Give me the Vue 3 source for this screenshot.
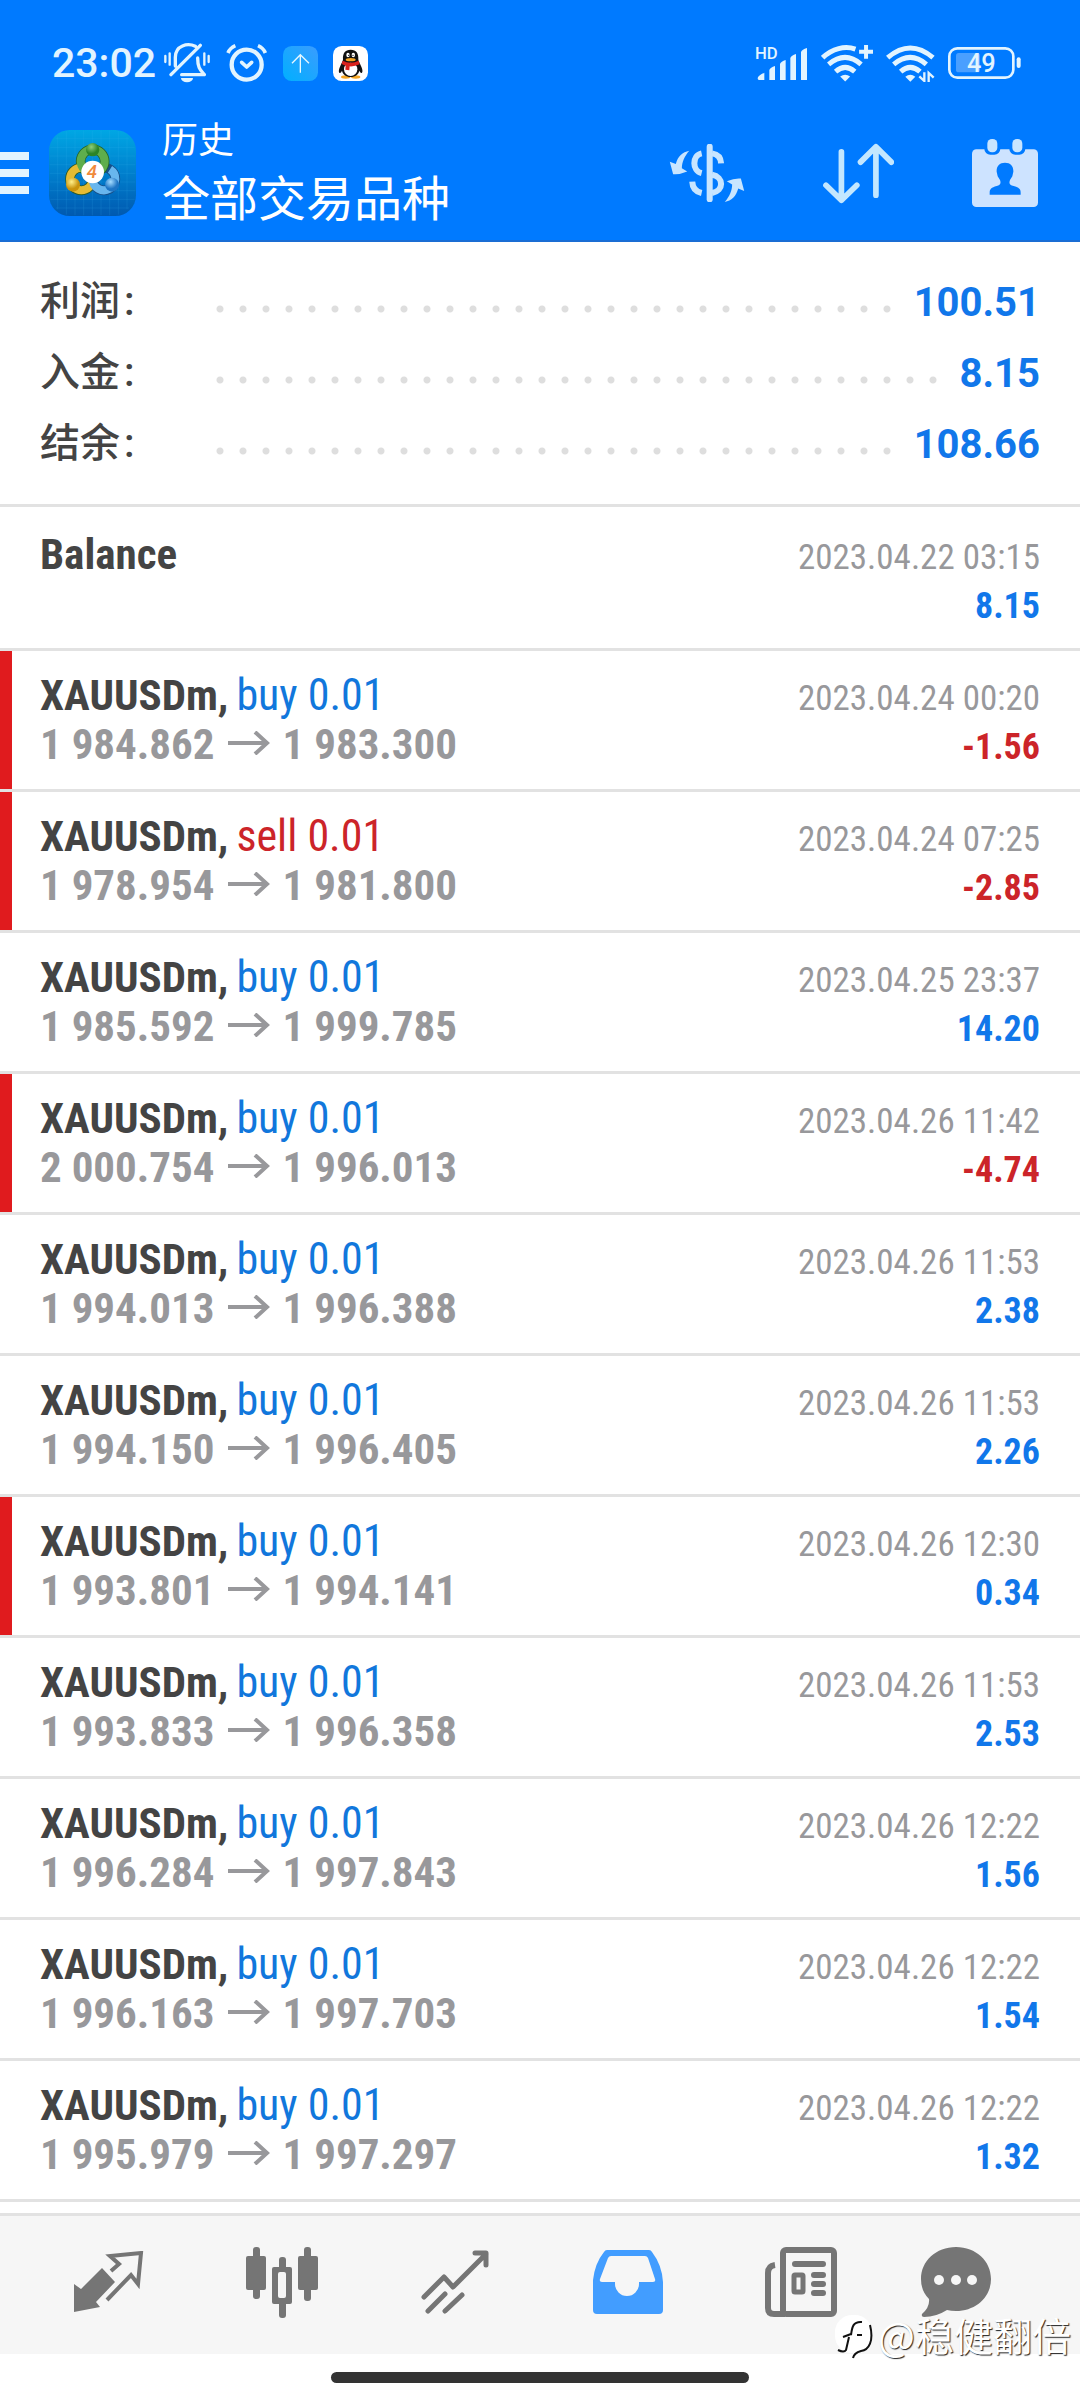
<script setup>
const totals = [
  { label: '利润', value: '100.51' },
  { label: '入金', value: '8.15' },
  { label: '结余', value: '108.66' },
]

const deals = [
  { symbol: 'Balance', time: '2023.04.22 03:15', profit: '8.15' },
  { symbol: 'XAUUSDm', side: 'buy', open: '1 984.862', close: '1 983.300', time: '2023.04.24 00:20', profit: '-1.56', marked: true },
  { symbol: 'XAUUSDm', side: 'sell', open: '1 978.954', close: '1 981.800', time: '2023.04.24 07:25', profit: '-2.85', marked: true },
  { symbol: 'XAUUSDm', side: 'buy', open: '1 985.592', close: '1 999.785', time: '2023.04.25 23:37', profit: '14.20' },
  { symbol: 'XAUUSDm', side: 'buy', open: '2 000.754', close: '1 996.013', time: '2023.04.26 11:42', profit: '-4.74', marked: true },
  { symbol: 'XAUUSDm', side: 'buy', open: '1 994.013', close: '1 996.388', time: '2023.04.26 11:53', profit: '2.38' },
  { symbol: 'XAUUSDm', side: 'buy', open: '1 994.150', close: '1 996.405', time: '2023.04.26 11:53', profit: '2.26' },
  { symbol: 'XAUUSDm', side: 'buy', open: '1 993.801', close: '1 994.141', time: '2023.04.26 12:30', profit: '0.34', marked: true },
  { symbol: 'XAUUSDm', side: 'buy', open: '1 993.833', close: '1 996.358', time: '2023.04.26 11:53', profit: '2.53' },
  { symbol: 'XAUUSDm', side: 'buy', open: '1 996.284', close: '1 997.843', time: '2023.04.26 12:22', profit: '1.56' },
  { symbol: 'XAUUSDm', side: 'buy', open: '1 996.163', close: '1 997.703', time: '2023.04.26 12:22', profit: '1.54' },
  { symbol: 'XAUUSDm', side: 'buy', open: '1 995.979', close: '1 997.297', time: '2023.04.26 12:22', profit: '1.32' },
]
</script>

<template>
  <div class="page">
    <header class="header">
      <div class="status">
        <div class="status-left">
          <span class="clock">23:02</span>
          <svg class="bell" width="48" height="42" viewBox="0 0 144 126" fill="none" stroke="#e2f4ff" stroke-width="10" stroke-linecap="round">
            <path d="M112 10 24 98M37 72V46C37 10 74 2 97 13M104 48C104 78 112 84 124 98H56" stroke-linejoin="round" />
            <path d="M7 42v18M20 34v34M124 34v34M137 42v18" stroke-width="7" />
            <path d="M54 108h36a18 13 0 0 1-36 0Z" fill="#e2f4ff" stroke="none" />
          </svg>
          <svg width="42" height="38" viewBox="0 0 126 114" fill="none" stroke="#e2f4ff" stroke-linecap="round" stroke-linejoin="round">
            <circle cx="62" cy="62" r="45" stroke-width="13" />
            <path d="M6 27Q12 12 28 5M118 27Q112 12 96 5" stroke-width="11" stroke-linecap="butt" />
            <path d="M47 55 62 69 77 55" stroke-width="11" />
          </svg>
          <svg width="35" height="35" viewBox="0 0 105 105">
            <defs>
              <linearGradient id="up" x1="0" y1="1" x2="1" y2="0">
                <stop offset="0" stop-color="#00b0ff" />
                <stop offset="1" stop-color="#3a9cff" />
              </linearGradient>
            </defs>
            <rect width="105" height="105" rx="26" fill="url(#up)" />
            <path d="M52 80V27M27 52 52 26 78 52" fill="none" stroke="#e6f7ff" stroke-width="4" />
          </svg>
          <svg width="35" height="35" viewBox="0 0 105 105">
            <rect width="105" height="105" rx="26" fill="#fff" />
            <ellipse cx="38" cy="93" rx="14" ry="5" fill="#f5a623" />
            <ellipse cx="68" cy="93" rx="14" ry="5" fill="#f5a623" />
            <path d="M53 11C36 11 29 22 30 40 30 46 26 50 22 60 16 72 17 80 20 81 23 82 27 74 27 74 29 85 39 93 53 93S77 85 79 74C79 74 83 82 86 81 89 80 90 72 84 60 80 50 76 46 76 40 77 22 70 11 53 11Z" fill="#111" />
            <ellipse cx="53" cy="70" rx="20" ry="20" fill="#fff" />
            <path d="M29 44Q53 56 77 44L80 55Q65 62 50 61L49 73 37 71 38 59 26 54Z" fill="#d9221c" />
            <ellipse cx="45" cy="27" rx="5" ry="7" fill="#fff" />
            <ellipse cx="61" cy="27" rx="5" ry="7" fill="#fff" />
            <circle cx="47" cy="28" r="2" fill="#111" />
            <circle cx="60" cy="28" r="2" fill="#111" />
            <ellipse cx="53" cy="41" rx="15" ry="5" fill="#f5a623" />
          </svg>
        </div>
        <div class="status-right">
          <svg class="signal" width="53" height="35" viewBox="0 0 159 105" fill="#e2f4ff">
            <text x="0" y="40" font-family="Roboto, sans-serif" font-size="50" font-weight="500">HD</text>
            <path d="M8 97Q8 90 28 80V102H12Q8 102 8 97ZM43 72Q46 64 60 60V102H43ZM75 54Q78 46 92 42V102H75ZM106 36Q109 28 123 24V102H106ZM138 18Q141 10 156 6V102H138Z" />
          </svg>
          <svg width="52" height="37" viewBox="0 0 157 111" fill="none" stroke="#e2f4ff" stroke-width="15">
            <path d="M5 38C34 10 72 1 104 12M23 58Q73 16 121 58M44 80Q73 54 102 80" />
            <path d="M136 0V41M115 20H157" stroke-width="12" />
            <path d="M58 95Q73 84 88 95L73 110Z" fill="#e2f4ff" stroke="none" />
          </svg>
          <svg width="49" height="37" viewBox="0 0 147 111" fill="none" stroke="#e2f4ff" stroke-width="15">
            <path d="M5 38Q73 -20 141 38M23 58Q73 16 121 58M44 80Q73 54 102 80" />
            <path d="M58 95Q73 84 88 95L73 110Z" fill="#e2f4ff" stroke="none" />
            <path d="M115 82V108L100 94M128 111V84L143 98" stroke-width="7" />
          </svg>
          <svg width="73" height="32" viewBox="0 0 219 96">
            <rect x="4" y="4" width="192" height="88" rx="24" fill="none" stroke="#e2f4ff" stroke-width="8" />
            <rect x="24" y="18" width="72" height="58" rx="8" fill="#4a9fff" />
            <rect x="206" y="31" width="12" height="32" rx="6" fill="#e2f4ff" />
            <text x="100" y="76" text-anchor="middle" fill="#e2f4ff" font-family="Roboto, sans-serif" font-size="76" font-weight="500">49</text>
          </svg>
        </div>
      </div>

      <div class="toolbar">
        <button class="menu" type="button" aria-label="菜单"><i></i><i></i><i></i></button>
        <svg class="logo" width="87" height="86" viewBox="0 0 261 258">
          <defs>
            <linearGradient id="tile" x1="0" y1="0" x2="0" y2="1">
              <stop offset="0" stop-color="#00a7e4" />
              <stop offset=".5" stop-color="#007fcd" />
              <stop offset="1" stop-color="#0059b0" />
            </linearGradient>
            <radialGradient id="green" cx=".4" cy=".3"><stop offset="0" stop-color="#8fce7b" /><stop offset="1" stop-color="#2b8427" /></radialGradient>
            <radialGradient id="gold" cx=".4" cy=".3"><stop offset="0" stop-color="#fff08a" /><stop offset="1" stop-color="#c9930c" /></radialGradient>
            <radialGradient id="sky" cx=".4" cy=".3"><stop offset="0" stop-color="#a5dcff" /><stop offset="1" stop-color="#1d74c4" /></radialGradient>
          </defs>
          <rect width="261" height="258" rx="62" fill="url(#tile)" />
          <path d="M26 20V238M52 4V254M78 2V256M104 2V256M130 2V256M156 2V256M182 2V256M208 4V254M234 20V238M20 26H240M4 52H257M2 78H259M2 104H259M2 130H259M2 156H259M2 182H259M4 208H257M20 234H240" stroke="#3fb8ee" stroke-opacity=".22" stroke-width="2" />
          <g fill="none" stroke-width="24">
            <circle cx="97" cy="147" r="34" stroke="#2b5b2a" stroke-width="29" />
            <circle cx="165" cy="147" r="34" stroke="#17508a" stroke-width="29" />
            <circle cx="131" cy="94" r="36" stroke="#24632b" stroke-width="29" />
            <circle cx="97" cy="147" r="34" stroke="#e5bb34" />
            <circle cx="131" cy="94" r="36" stroke="#5fae4c" />
            <path d="M131 147a34 34 0 1 0 52-29" stroke="#68b6ee" />
          </g>
          <circle cx="131" cy="59" r="20" fill="url(#green)" />
          <circle cx="72" cy="164" r="21" fill="url(#gold)" />
          <circle cx="189" cy="164" r="21" fill="url(#sky)" />
          <circle cx="131" cy="126" r="34" fill="#fff" />
          <text x="129" y="145" text-anchor="middle" font-family="Roboto, sans-serif" font-style="italic" font-weight="500" font-size="56" fill="#f08a3c">4</text>
        </svg>
        <div class="titles">
          <div class="section">历史</div>
          <h1>全部交易品种</h1>
        </div>
        <div class="actions">
          <button type="button" aria-label="货币">
            <svg width="76" height="58" viewBox="0 0 226 173" fill="none" stroke="#c8e5ff" stroke-width="18">
              <path d="M121 8V165" stroke-linecap="round" />
              <path d="M97 28C68 34 68 80 97 87M69 112Q70 140 97 146" />
              <path d="M128 28Q154 32 155 58M128 92C164 98 164 140 128 146" />
              <g fill="#c8e5ff" stroke="none">
                <path d="M60 20C40 24 26 36 20 60L2 53 12 90Q30 92 54 82L38 72C38 54 46 36 60 20Z" />
                <path d="M166 173C186 169 200 157 206 133L224 140 214 103Q196 101 172 111L188 121C188 139 180 157 166 173Z" />
              </g>
            </svg>
          </button>
          <button type="button" aria-label="排序">
            <svg width="71" height="61" viewBox="0 0 212 182" fill="none" stroke="#c3e7ff" stroke-width="17" stroke-linecap="round" stroke-linejoin="round">
              <path d="M55 26V170M9 126 55 171 101 126M158 156V12M112 57 158 11 204 57" />
            </svg>
          </button>
          <button type="button" aria-label="日历">
            <svg width="66" height="68" viewBox="0 0 198 204">
              <rect y="31" width="198" height="173" rx="13" fill="#cde3ff" />
              <rect x="37" y="-10" width="48" height="57" rx="18" fill="#007aff" />
              <rect x="112" y="-10" width="48" height="57" rx="18" fill="#007aff" />
              <rect x="46" y="0" width="30" height="40" rx="14" fill="#c8e5ff" />
              <rect x="121" y="0" width="30" height="40" rx="14" fill="#c8e5ff" />
              <path d="M99 71C82 71 73 82 74 98L77 112 84 123C88 134 84 139 74 141 58 146 53 150 53 161V167H146V161C146 150 141 146 125 141 113 139 110 134 114 123L121 112 124 98C125 82 116 71 99 71Z" fill="#007aff" />
            </svg>
          </button>
        </div>
      </div>
    </header>

    <main class="content">
      <dl class="totals">
        <div v-for="t in totals" :key="t.label" class="total">
          <dt>{{ t.label }}<b>:</b></dt>
          <span class="dots"></span>
          <dd>{{ t.value }}</dd>
        </div>
      </dl>

      <ul class="deals">
        <li v-for="(d, i) in deals" :key="i" class="deal" :class="{ marked: d.marked }">
          <div class="deal-main">
            <div class="name">
              <b>{{ d.symbol }}<template v-if="d.side">,</template></b>
              <span v-if="d.side" :class="d.side">{{ d.side }} 0.01</span>
            </div>
            <div v-if="d.open" class="prices">
              <span>{{ d.open }}</span>
              <svg width="42" height="24" viewBox="0 0 42 24" fill="none" stroke="#98989b">
                <path d="M0 12H39" stroke-width="4" />
                <path d="M27 1 39 12 27 23" stroke-width="4" />
              </svg>
              <span>{{ d.close }}</span>
            </div>
          </div>
          <div class="deal-side">
            <time>{{ d.time }}</time>
            <strong :class="{ loss: d.profit.startsWith('-') }">{{ d.profit }}</strong>
          </div>
        </li>
      </ul>
    </main>

    <nav class="tabs">
      <button type="button" aria-label="行情">
        <svg width="70" height="62" viewBox="0 0 70 62">
          <path d="M0 33 7 38 28 17 41 31 22 51 26 56 0 61Z" fill="#757575" />
          <path d="M37 20 45 13 36 5 67 2 64 33 57 24 33 49" fill="none" stroke="#757575" stroke-width="4" />
        </svg>
      </button>
      <button type="button" aria-label="图表">
        <svg width="72" height="71" viewBox="0 0 72 71" fill="#757575">
          <rect x="7" width="7" height="52" rx="3" />
          <rect y="9" width="20" height="34" rx="2" />
          <rect x="33" y="10" width="7" height="61" rx="3" />
          <rect x="26" y="20" width="20" height="37" rx="2" />
          <rect x="32" y="25" width="8" height="26" rx="2" fill="#f6f6f6" />
          <rect x="58" width="7" height="54" rx="3" />
          <rect x="52" y="9" width="20" height="34" rx="2" />
        </svg>
      </button>
      <button type="button" aria-label="交易">
        <svg width="68" height="65" viewBox="0 0 68 65" fill="none" stroke="#757575" stroke-width="5" stroke-linecap="round" stroke-linejoin="round">
          <path d="M3 47 23 27 32 37 65 4M54 3H65V15M24 44 7 61M41 45 24 61" />
        </svg>
      </button>
      <button type="button" aria-label="历史" aria-current="page">
        <svg width="70" height="64" viewBox="0 0 70 64" fill="#429dff" fill-rule="evenodd">
          <path d="M14 0H56Q58 0 59 2Q69 15 70 32V60Q70 64 66 64H4Q0 64 0 60V30Q2 13 11 2Q12 0 14 0ZM18 6Q16 6 15 8L7 29Q6 32 9 32H22V34A12 12 0 0 0 46 34V32H60Q63 32 62 29L55 8Q54 6 52 6Z" />
        </svg>
      </button>
      <button type="button" aria-label="新闻">
        <svg width="72" height="70" viewBox="0 0 72 70" fill="none" stroke="#757575" stroke-width="6" stroke-linecap="round">
          <path d="M10 18Q3 19 3 26V61Q3 67 9 67H20" stroke-linecap="butt" />
          <rect x="18" y="3" width="51" height="64" rx="3" />
          <path d="M30 17H58M49 28H58M49 37H58M49 46H58" />
          <rect x="29" y="28" width="9" height="17" rx="1" stroke-width="5" />
        </svg>
      </button>
      <button type="button" aria-label="聊天">
        <svg width="70" height="70" viewBox="0 0 70 70" fill="#757575">
          <path d="M35 0C55 0 70 14 70 32S55 64 35 64Q30 64 26 63Q15 70 3 70Q0 70 1 67Q9 60 8 52Q0 44 0 32C0 14 15 0 35 0Z" />
          <g fill="#f6f6f6"><circle cx="18" cy="33" r="5" /><circle cx="35" cy="33" r="5" /><circle cx="51" cy="33" r="5" /></g>
        </svg>
      </button>
    </nav>
    <div class="home"><i></i></div>

    <div class="watermark">
      <svg width="38" height="44" viewBox="0 0 38 44" fill="none">
        <rect width="37" height="38" rx="17" fill="#fff" />
        <path d="M27 7C17 6 17 14 16 20M8 22 16 19M14 22 11 35Q9 38 3 35M22 20H27" stroke="#111" stroke-width="2" />
        <path d="M35 10C39 26 34 35 26 36Q19 38 18 43" stroke="#111" stroke-width="2" />
      </svg>
      <span>@稳健翻倍</span>
    </div>
  </div>
</template>

<style>
body {
  margin: 0;
  background: #fff;
}
</style>

<style scoped>
.page {
  position: relative;
  display: flex;
  flex-direction: column;
  min-height: 100vh;
  background: #fff;
  font-family: "Roboto Condensed", Roboto, "Noto Sans CJK SC", sans-serif;
  color: #444;
}

svg {
  display: block;
  flex: none;
}

button {
  padding: 0;
  border: 0;
  background: none;
}

.header {
  background: #007aff;
  border-bottom: 2px solid #1a6dd4;
}

.status {
  display: flex;
  justify-content: space-between;
  align-items: center;
  height: 126px;
  padding: 0 59px 0 52px;
}

.status-left,
.status-right {
  display: flex;
  align-items: center;
}

.status-left {
  gap: 15px;
}

.status-right {
  gap: 13px;
}

.clock {
  font: 500 41px/48px Roboto, sans-serif;
  color: #e2f4ff;
}

.bell {
  margin-left: -8px;
}

.signal {
  overflow: visible;
}

.toolbar {
  display: flex;
  align-items: center;
  height: 94px;
  padding: 0 42px 20px 0;
}

.menu {
  display: flex;
  flex-direction: column;
  gap: 9px;
  width: 29px;
}

.menu i {
  height: 8px;
  background: #e2f4ff;
}

.logo {
  margin-left: 20px;
}

.titles {
  flex: 1;
  margin-left: 26px;
  padding-bottom: 8px;
  font-family: "Noto Sans CJK SC", sans-serif;
  color: #fff;
}

.section {
  font-size: 36px;
  line-height: 52px;
}

h1 {
  margin: 0;
  font-size: 48px;
  line-height: 64px;
  font-weight: 400;
}

.actions {
  display: flex;
  align-items: center;
  gap: 78px;
}

.content {
  flex: 1;
}

.totals {
  margin: 0;
  padding: 24px 40px 25px;
  border-bottom: 3px solid #e2e2e2;
}

.total {
  display: flex;
  align-items: center;
  height: 71px;
}

dt {
  width: 168px;
  padding-bottom: 4px;
  font: 500 40px/48px "Noto Sans CJK SC", sans-serif;
}

dt b {
  margin-left: 4px;
  font-family: Roboto, sans-serif;
  font-weight: 500;
}

.dots {
  flex: 1;
  height: 8px;
  margin: 14px 14px 0 0;
  background: radial-gradient(circle at 12px 4px, #dedede 3px, transparent 4px) 0 0 / 23px 8px repeat-x;
}

dd {
  margin: 0;
  padding-top: 2px;
  font: 700 40px/48px Roboto, sans-serif;
  color: #1177ea;
}

.deals {
  margin: 0;
  padding: 3px 0 0;
  list-style: none;
}

.deal {
  display: flex;
  justify-content: space-between;
  height: 118px;
  padding: 20px 40px 0;
  border-bottom: 3px solid #e2e2e2;
}

.marked {
  box-shadow: inset 12px 0 #e01b1e;
}

.name,
.prices {
  font-size: 44px;
  line-height: 49px;
  white-space: nowrap;
}

.name b,
.prices span {
  font-size: 43px;
  font-weight: 700;
}

.name span {
  margin-left: 8px;
}

.buy {
  color: #1177dc;
}

.sell {
  color: #cc2429;
}

.prices {
  display: flex;
  align-items: center;
  gap: 13px;
  color: #98989b;
}

.prices svg {
  margin-bottom: 4px;
}

.deal-side {
  display: flex;
  flex-direction: column;
  align-items: flex-end;
  padding-top: 3px;
}

time {
  font-size: 35px;
  line-height: 49px;
  color: #98989b;
}

strong {
  font-size: 36px;
  line-height: 49px;
  color: #1177ea;
}

.loss {
  color: #cc2429;
}

.tabs {
  display: grid;
  grid-template-columns: repeat(5, 173fr) 138fr;
  align-items: center;
  justify-items: center;
  height: 132px;
  padding: 0 55px 6px 22px;
  border-top: 3px solid #e2e2e2;
  background: #f6f6f6;
}

.home {
  display: flex;
  justify-content: center;
  height: 28px;
  padding-top: 18px;
}

.home i {
  width: 418px;
  height: 11px;
  border-radius: 6px;
  background: #333;
}

.watermark {
  position: absolute;
  right: 9px;
  bottom: 36px;
  display: flex;
  align-items: center;
  gap: 5px;
}

.watermark span {
  padding-bottom: 6px;
  font: 400 39px/48px "Noto Sans CJK SC", sans-serif;
  color: #fff;
  text-shadow: 1px 1px 1px #222;
}
</style>
